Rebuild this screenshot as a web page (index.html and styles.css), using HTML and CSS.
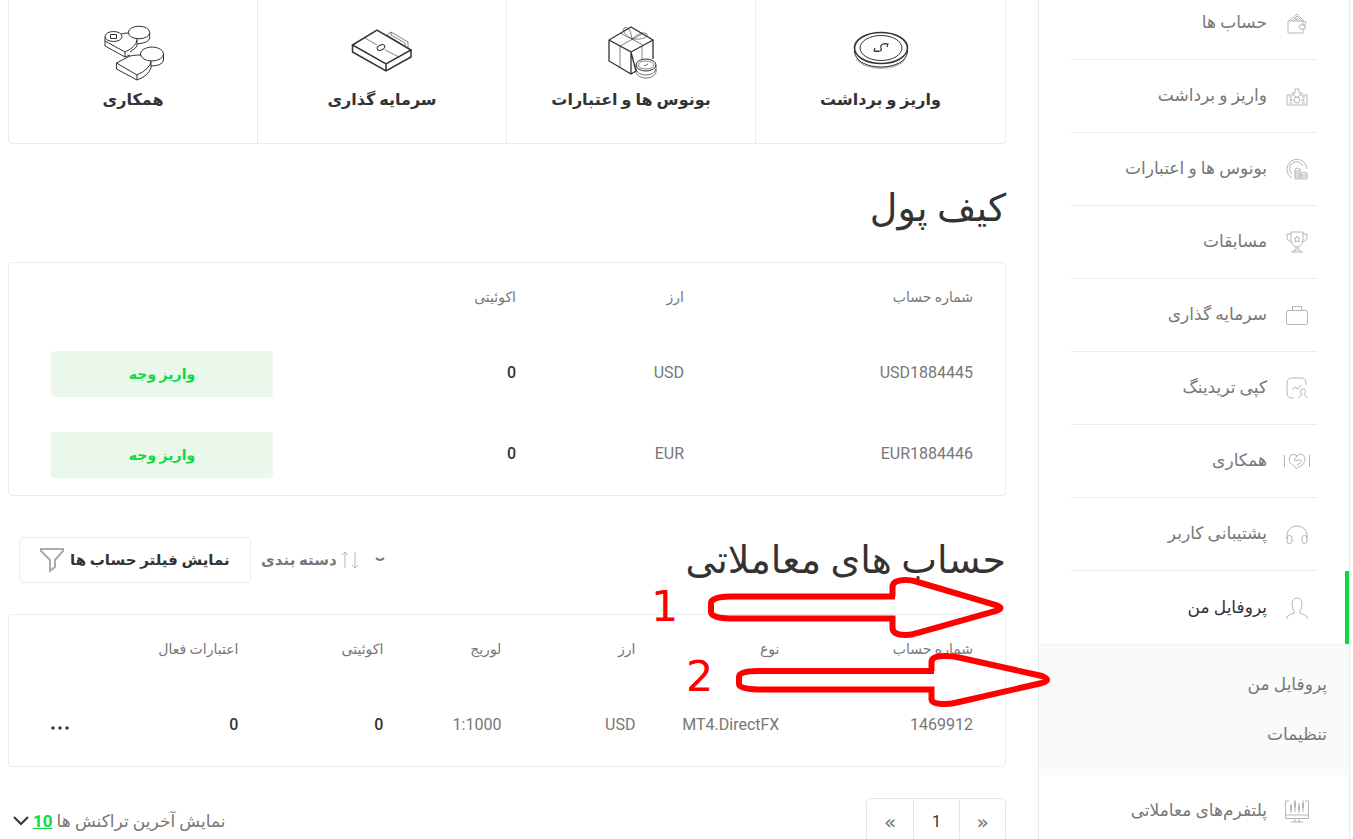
FILE: index.html
```html
<!DOCTYPE html>
<html lang="fa" dir="rtl">
<head>
    <meta charset="UTF-8">
    <meta name="viewport" content="width=device-width, initial-scale=1.0">
    <title>کیف پول</title>
    <link rel="stylesheet" href="styles.css">
</head>
<body>

<div class="page">
    <aside class="sidebar">
        <ul class="menu">
            <li class="menu-item">
                <a href="#">
                    <svg class="menu-icon" viewBox="0 0 28 28"><path d="M20 16v-4H5v12h15v-4M22 16h-5l-1 2 1 2h5zM20 12l3 1-1 3M6 12l8-7 7 7M9 12l5-5 5 5M12 9l4 3M12 12l2-3"/></svg>
                    <span>حساب ها</span>
                </a>
            </li>
            <li class="menu-item">
                <a href="#">
                    <svg class="menu-icon" viewBox="0 0 28 28"><path d="M10 13H4v10h20V13h-6M12 7h4v4h3l-5 5-5-5h3zM6 15h3M19 15h3M6 21h3M19 21h3"/><circle cx="14" cy="18" r="3"/><circle cx="8" cy="18" r="1"/><circle cx="20" cy="18" r="1"/></svg>
                    <span>واریز و برداشت</span>
                </a>
            </li>
            <li class="menu-item">
                <a href="#">
                    <svg class="menu-icon" viewBox="0 0 28 28"><path d="M9 23A10 10 0 1 1 24 14M9 19A7 7 0 1 1 20 11M12 14q2.500-2 5 0v10h-5zM18 18q3-1 6 0v6h-6zM12 16h5M12 18h5M12 20h5M12 22h5M18 20h6M18 22h6"/></svg>
                    <span>بونوس ها و اعتبارات</span>
                </a>
            </li>
            <li class="menu-item">
                <a href="#">
                    <svg class="menu-icon" viewBox="0 0 28 28"><path d="M8 4h12v7q0 7-6 8-6-1-6-8zM8 6H4v3q0 4 5 5M20 6h4v3q0 4-5 5M13 19v3l-3 1M15 19v3l3 1M8 24h12M14 8l1 2 2 .3-1.500 1.400.5 2.300-2-1-2 1 .5-2.300L11 10.300l2-.3z"/></svg>
                    <span>مسابقات</span>
                </a>
            </li>
            <li class="menu-item">
                <a href="#">
                    <svg class="menu-icon" viewBox="0 0 28 28"><rect x="3.500" y="9.500" width="21" height="14" rx="2"/><path d="M9.500 9V5.500h9V9"/></svg>
                    <span>سرمایه گذاری</span>
                </a>
            </li>
            <li class="menu-item">
                <a href="#">
                    <svg class="menu-icon" viewBox="0 0 28 28"><path d="M11 24H9q-5 0-5-5V9q0-5 5-5h9q5 0 5 5v2M9 16l3-3 3 2 3-4M16 24q0-2 2.500-3 1 0 0-1-1-1-1-2.500 0-2.500 2.500-2.500t2.500 2.500q0 1.500-1 2.500-1 1 0 1 2.500 1 2.500 3"/></svg>
                    <span>کپی تریدینگ</span>
                </a>
            </li>
            <li class="menu-item">
                <a href="#">
                    <svg class="menu-icon" viewBox="0 0 28 28"><path d="M1.500 8v12M26.500 8v12M14 9q-3-3-6-1-3 3-1.500 6.500Q9 18 13.500 21.500q5-2 7-5 2-3 1.500-5.500-1-4-5-4-3 1-6 6 1 2 4 0h2.500q2 1 0 3L14 18"/></svg>
                    <span>همکاری</span>
                </a>
            </li>
            <li class="menu-item">
                <a href="#">
                    <svg class="menu-icon" viewBox="0 0 28 28"><path d="M4 19v-4a10 9 0 0 1 20 0v4"/><rect x="4" y="15.500" width="5" height="8" rx="2.500"/><rect x="19" y="15.500" width="5" height="8" rx="2.500"/></svg>
                    <span>پشتیبانی کاربر</span>
                </a>
            </li>
            <li class="menu-item active">
                <a href="#">
                    <svg class="menu-icon" viewBox="0 0 28 28"><path d="M3.500 25q0-3 3-4l4.500-2q1-1-.5-3Q9 13 9 10q0-6 5-6t5 6q0 3-1.500 6-1.500 2-.5 3l4.500 2q3 1 3 4"/></svg>
                    <span>پروفایل من</span>
                </a>
            </li>
        </ul>
        <ul class="submenu">
            <li><a href="#">پروفایل من</a></li>
            <li><a href="#">تنظیمات</a></li>
        </ul>
        <ul class="menu">
            <li class="menu-item">
                <a href="#">
                    <svg class="menu-icon" viewBox="0 0 28 28"><path d="M6 4H2.500v17.500h23V4H22M3 18h22M12 22v3M16 22v3M8 25h12M8 7v9M12 3v12M16 6v10M20 3v12M7.500 9h1v4h-1zM11.500 5h1v5h-1zM15.500 9h1v4h-1zM19.500 6h1v5h-1z"/></svg>
                    <span>پلتفرم‌های معاملاتی</span>
                </a>
            </li>
        </ul>
    </aside>

    <main class="content">
        <nav class="cards">
            <a class="card" href="#">
                <svg class="card-icon" viewBox="0 0 64 56"><ellipse cx="32" cy="23" rx="26.500" ry="15.500" stroke-width="1.600"/><ellipse cx="32" cy="23" rx="21" ry="12.500"/><path d="M5.500 23v4c2 20 51 20 53 0v-4"/><path d="M8 34c9 12 39 12 48 0" stroke-dasharray="1 1" stroke-width="2" opacity=".6"/><path d="M26 23l-1 3q3 1 6 0 2-1 1-3-1-3 2-4 2-1 5 0l-1 3M25 26h5M34 19h5" stroke-width="1.200"/></svg>
                <span>واریز و برداشت</span>
            </a>
            <a class="card" href="#">
                <svg class="card-icon" viewBox="0 0 64 56"><path d="M37 46l-5 3L10 36V15L32 2l22 13-22 12zM10 15l22 12v22M54 15v19" stroke-width="1.300"/><path d="M21 21v22M43 21v14M21 8l23 12M43 9L21 21M33 14Q22 8 25 3q6-3 8 11 10-9 15-5 1 6-15 5" opacity=".6"/><ellipse cx="47" cy="40" rx="10" ry="6"/><ellipse cx="47" cy="40" rx="8" ry="4" opacity=".6"/><path d="M37 40v7c2 8 18 8 20 0v-7M37 44c2 8 18 8 20 0M45 41l4-2" opacity=".7"/></svg>
                <span>بونوس ها و اعتبارات</span>
            </a>
            <a class="card" href="#">
                <svg class="card-icon" viewBox="0 0 64 56"><path d="M2.500 20L27 5l34 20-25 14zM2.500 20v7L36 46l25-14v-7M36 39v7" stroke-width="1.500"/><path d="M15 13l12 7M35 25l14 7M37 10l4-3 17 10v6M41 7v3l14 8v4M37 10l16 10" opacity=".6"/><ellipse cx="31" cy="22.500" rx="4" ry="2.500" transform="rotate(-25 31 22.500)"/></svg>
                <span>سرمایه گذاری</span>
            </a>
            <a class="card" href="#">
                <svg class="card-icon" viewBox="0 0 64 56"><ellipse cx="38" cy="7.500" rx="10.700" ry="6.300"/><path d="M48.700 8v5q-1 5-12.700 6"/><ellipse cx="12.500" cy="11.500" rx="8.500" ry="5"/><path d="M9.500 9.500h6v4h-6zM20 9q3-1 8-1M4 12v4l20 11q11-5 12-12v-2M4 16v5l20 11v-5M36 15v6q-2 3-7 6M24 32l5-2"/><ellipse cx="51" cy="29" rx="11.500" ry="7"/><path d="M62.500 29v6q-1 6-13 6M40 30q-10 0-13 2l-11.500 6L36 50q13-6 14-14M15.500 38v6L36 55v-5M50 36v7q-3 8-14 12"/></svg>
                <span>همکاری</span>
            </a>
        </nav>

        <h1 class="title">کیف پول</h1>
        <div class="panel">
            <table class="wallets">
                <thead>
                    <tr>
                        <th>شماره حساب</th>
                        <th>ارز</th>
                        <th>اکوئیتی</th>
                        <th></th>
                    </tr>
                </thead>
                <tbody>
                    <tr>
                        <td>USD1884445</td>
                        <td>USD</td>
                        <td class="amount">0</td>
                        <td class="action"><button type="button" class="deposit-btn">واریز وجه</button></td>
                    </tr>
                    <tr>
                        <td>EUR1884446</td>
                        <td>EUR</td>
                        <td class="amount">0</td>
                        <td class="action"><button type="button" class="deposit-btn">واریز وجه</button></td>
                    </tr>
                </tbody>
            </table>
        </div>

        <div class="section-head">
            <h2 class="title">حساب های معاملاتی</h2>
            <div class="tools">
                <div class="sort">
                    <svg class="sort-caret" viewBox="0 0 10 6"><path d="M1 1q4 4 8 0"/></svg>
                    <svg class="sort-arrows" viewBox="0 0 18 18"><path d="M4 17V1M1 4l3-3 3 3M14 1v16M11 14l3 3 3-3"/></svg>
                    <select class="sort-select" aria-label="دسته بندی">
                        <option>دسته بندی</option>
                    </select>
                </div>
                <button type="button" class="filter-btn">
                    <span>نمایش فیلتر حساب ها</span>
                    <svg class="filter-icon" viewBox="0 0 24 24"><path d="M1 1h22v2l-8 9v7l-5 4V12L1 3z"/></svg>
                </button>
            </div>
        </div>
        <div class="panel">
            <table class="accounts">
                <thead>
                    <tr>
                        <th>شماره حساب</th>
                        <th>نوع</th>
                        <th>ارز</th>
                        <th>لوریج</th>
                        <th>اکوئیتی</th>
                        <th>اعتبارات فعال</th>
                        <th></th>
                    </tr>
                </thead>
                <tbody>
                    <tr>
                        <td>1469912</td>
                        <td><bdi>MT4.DirectFX</bdi></td>
                        <td>USD</td>
                        <td><bdi dir="ltr">1:1000</bdi></td>
                        <td class="amount">0</td>
                        <td class="amount">0</td>
                        <td class="more">
                            <button type="button" class="more-btn" aria-label="بیشتر">
                                <svg viewBox="0 0 18 4"><circle cx="2" cy="2" r="1.700"/><circle cx="9" cy="2" r="1.700"/><circle cx="16" cy="2" r="1.700"/></svg>
                            </button>
                        </td>
                    </tr>
                </tbody>
            </table>
        </div>

        <div class="list-foot">
            <nav class="pager" dir="ltr">
                <a href="#" class="step">«</a>
                <a href="#" class="current">1</a>
                <a href="#" class="step">»</a>
            </nav>
            <div class="latest">
                <span>نمایش آخرین تراکنش ها</span>
                <a href="#">10</a>
                <svg class="latest-caret" viewBox="0 0 16 10"><path d="M1 1l7 7 7-7"/></svg>
            </div>
        </div>
    </main>

    <svg class="notes" viewBox="0 0 420 150">
        <text x="11" y="51">1</text>
        <text x="46" y="121">2</text>
        <path d="M255 26.500H90Q71 27 71 33V42Q71 48 90 48.500H252.500V58Q252.500 65 266 65Q272 65 277 63L356 41Q365 38 356 35L276 11.500Q271 10 266 10Q252.500 10 252.500 17V26.500"/>
        <path d="M294 101H118Q99 101 99 107V114Q99 119 118 119.500H291.500V129Q291.500 134 305 134Q312 134 319 132L402 113Q412 110 402 106L319 87.500Q312 86 305 86Q291.500 86 291.500 92V101"/>
    </svg>
</div>

</body>
</html>
```

FILE: styles.css
```css
* {
    box-sizing: border-box;
}
body {
    margin: 0;
    height: 100vh;
    overflow: hidden;
    font-family: Roboto, "DejaVu Sans", sans-serif;
    font-size: 16px;
    color: #777;
    background-color: #fff;
}
a {
    color: inherit;
    text-decoration: none;
}
button,
select {
    font-family: inherit;
    cursor: pointer;
}
svg {
    display: block;
    flex: none;
    fill: none;
    stroke: currentColor;
    overflow: visible;
}
.page {
    position: relative;
    display: flex;
    min-height: 100vh;
    padding-right: 3px;
}

/* Sidebar */
.sidebar {
    flex: none;
    width: 312px;
    margin-top: -13px;
    font-size: 17px;
    border: 1px solid #eaeaea;
    border-width: 0 1px;
}
.menu,
.submenu {
    margin: 0;
    padding: 0;
    list-style: none;
}
.menu-item {
    padding: 0 32px;
}
.menu-item a {
    display: flex;
    align-items: center;
    gap: 16px;
    height: 73px;
    padding-right: 6px;
    border-bottom: 1px solid #ececec;
}
.menu-item span {
    padding-bottom: 2px;
}
.menu-item.active {
    color: #333;
    border-right: 4px solid #0cda3f;
    padding-right: 28px;
}
.menu-item.active a {
    border-bottom: none;
}
.menu-icon {
    width: 28px;
    height: 28px;
    color: #b5b5b5;
}
.submenu {
    padding: 14px 22px 16px;
    line-height: 50px;
    background-color: #fafafa;
    border-top: 1px solid #f2f2f2;
}

/* Content */
.content {
    flex: 1;
    min-width: 0;
    padding: 0 32px 0 8px;
}
.cards {
    display: grid;
    grid-template-columns: repeat(4, 1fr);
    border: 1px solid #ebebeb;
    border-top: none;
    border-radius: 0 0 4px 4px;
}
.card {
    display: flex;
    flex-direction: column;
    align-items: center;
    gap: 3px;
    height: 143px;
    padding-top: 25px;
    font-weight: bold;
    line-height: 32px;
    color: #333;
}
.card + .card {
    border-right: 1px solid #ebebeb;
}
.card-icon {
    width: 64px;
    height: 56px;
}
.title {
    margin: 0;
    font-size: 38px;
    font-weight: normal;
    line-height: 60px;
    color: #333;
}
h1.title {
    margin: 34px 0 24px;
}
.panel {
    padding: 0 32px 0 42px;
    border: 1px solid #ebebeb;
    border-radius: 4px;
}
table {
    width: 100%;
    border-collapse: collapse;
    table-layout: fixed;
}
th,
td {
    padding: 0 0 3px;
    text-align: right;
}
th {
    height: 70px;
    font-size: 14px;
    font-weight: normal;
}
td {
    height: 81px;
}
.action {
    padding: 0;
}
.amount {
    font-weight: 500;
    color: #333;
}
.wallets th:nth-child(2) {
    width: 168px;
}
.wallets th:nth-child(3) {
    width: 243px;
}
.wallets th:nth-child(4) {
    width: 222px;
}
.accounts th:nth-child(1) {
    width: 21%;
}
.accounts th:nth-child(2) {
    width: 144px;
}
.accounts th:nth-child(3) {
    width: 134px;
}
.accounts th:nth-child(4) {
    width: 118px;
}
.accounts th:nth-child(5) {
    width: 145px;
}
.deposit-btn {
    width: 100%;
    height: 46px;
    font-size: 14px;
    font-weight: bold;
    color: #0cda3f;
    background-color: #eaf8eb;
    border: none;
    border-radius: 4px;
}
.section-head {
    display: flex;
    align-items: center;
    justify-content: space-between;
    padding: 34px 0 24px;
}
.tools {
    display: flex;
    align-items: center;
    gap: 10px;
    padding-left: 11px;
}
.sort {
    display: flex;
    align-items: center;
}
.sort-caret {
    width: 10px;
    height: 6px;
    margin-left: 16px;
    stroke-width: 2;
}
.sort-arrows {
    width: 18px;
    height: 18px;
    margin-left: 4px;
    color: #b5b5b5;
}
.sort-select {
    appearance: none;
    padding: 0;
    font-size: 15px;
    font-weight: bold;
    color: #777;
    background: none;
    border: none;
}
.filter-btn {
    display: flex;
    align-items: center;
    gap: 6px;
    height: 46px;
    padding: 0 20px;
    font-size: 15px;
    font-weight: bold;
    color: #333;
    background-color: #fff;
    border: 1px solid #ebebeb;
    border-radius: 4px;
}
.filter-icon {
    width: 24px;
    height: 24px;
    color: #aaa;
    stroke-width: 2;
}
.more {
    text-align: left;
}
.more-btn {
    padding: 0;
    background: none;
    border: none;
}
.more-btn svg {
    width: 18px;
    height: 4px;
    fill: #333;
    stroke: none;
}
.list-foot {
    display: flex;
    align-items: flex-start;
    justify-content: space-between;
    padding: 31px 0 0 5px;
}
.pager {
    display: flex;
    border: 1px solid #e6e6e6;
    border-radius: 4px;
}
.pager a {
    width: 46px;
    line-height: 46px;
    text-align: center;
}
.pager a + a {
    border-left: 1px solid #e6e6e6;
}
.pager .step {
    font-family: "DejaVu Sans", sans-serif;
    font-size: 20px;
}
.pager .current {
    color: #333;
}
.latest {
    display: flex;
    align-items: center;
    gap: 4px;
    height: 46px;
    font-size: 17px;
}
.latest a {
    font-weight: bold;
    color: #0cda3f;
    text-decoration: underline;
}
.latest-caret {
    width: 16px;
    height: 10px;
    color: #333;
    stroke-width: 2;
}

/* Step markers drawn over the page */
.notes {
    position: absolute;
    top: 570px;
    right: 293px;
    width: 420px;
    height: 150px;
    color: #f00;
    stroke-width: 6;
    pointer-events: none;
}
.notes text {
    font-family: "DejaVu Sans", sans-serif;
    font-size: 43px;
    direction: ltr;
    fill: #f00;
    stroke: none;
}
```
